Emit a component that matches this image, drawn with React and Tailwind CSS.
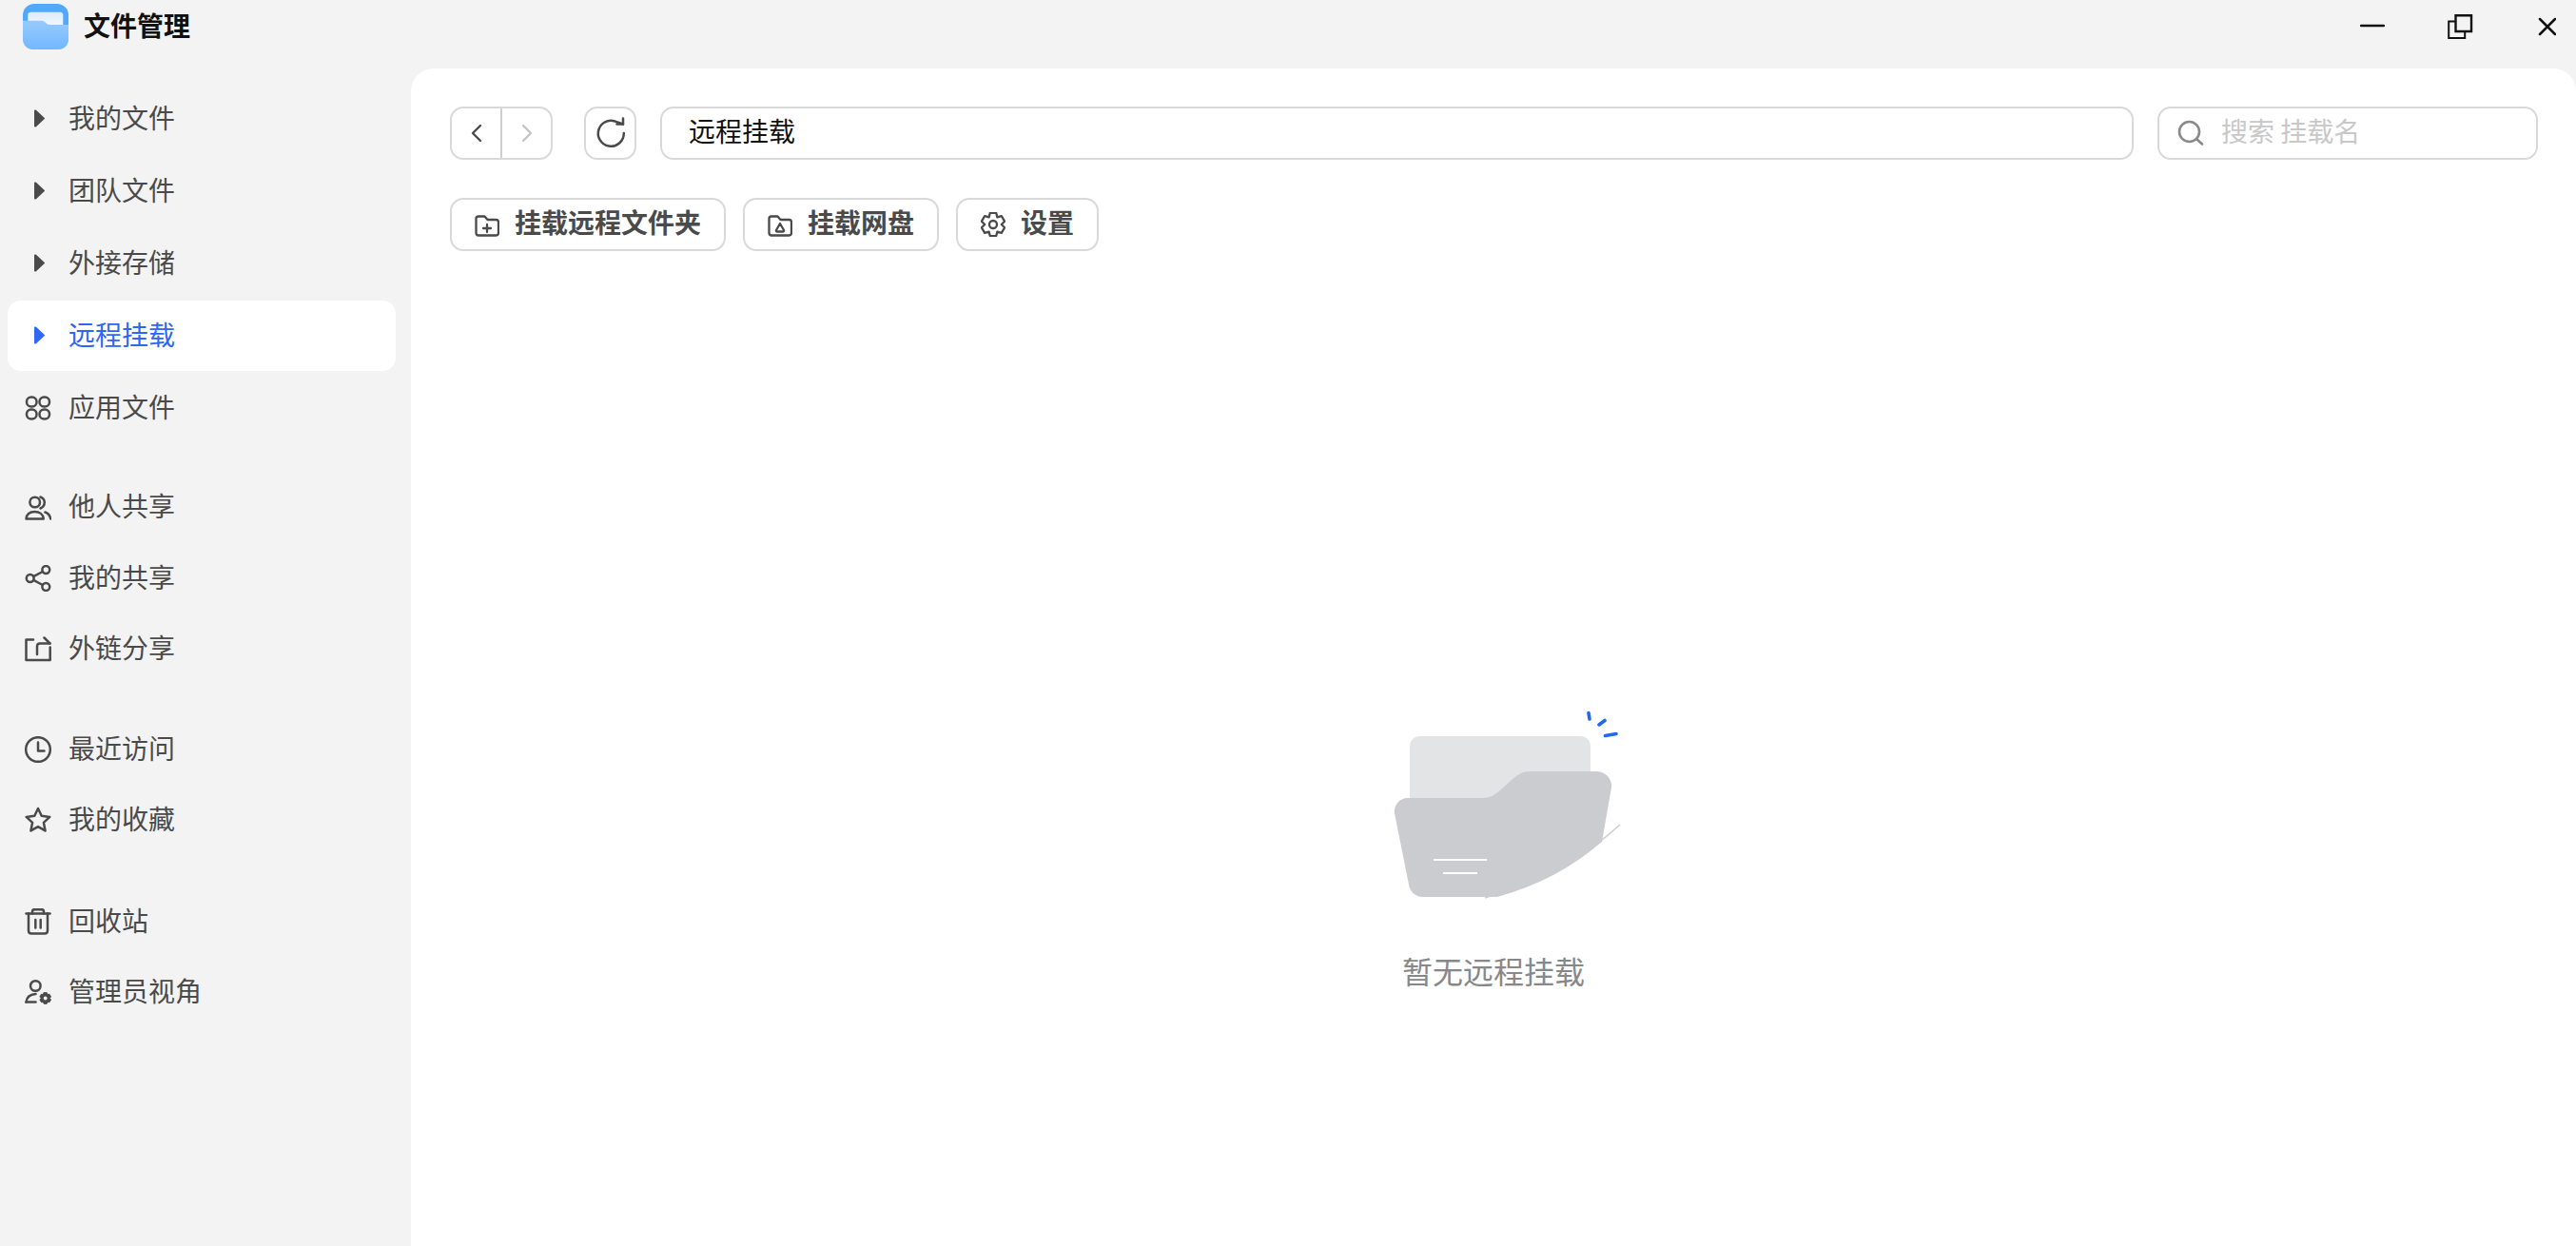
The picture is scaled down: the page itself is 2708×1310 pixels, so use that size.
const Caret = ({ className }) => (
  <svg viewBox="0 0 14 20" className={`w-3.5 h-5 ${className}`} fill="currentColor">
    <path d="M3 1.500C3 .5 4 0 5 .8l8.500 7.900q1 .8 0 1.600L5 18.200c-1 .8-2 .3-2-.7z" />
  </svg>
);

const Icon = ({ children }) => (
  <svg
    viewBox="0 0 28 28"
    className="w-7 h-7"
    fill="none"
    stroke="#4a4a4a"
    strokeWidth="2.500"
    strokeLinecap="round"
    strokeLinejoin="round"
  >
    {children}
  </svg>
);

const AppsIcon = () => (
  <Icon>
    <rect x="2" y="2.500" width="10.500" height="10" rx="4.800" />
    <rect x="15.500" y="2.500" width="10.500" height="10" rx="4.800" />
    <rect x="2" y="15.500" width="10.500" height="10" rx="4.800" />
    <rect x="15.500" y="15.500" width="10.500" height="10" rx="4.800" />
  </Icon>
);

const UsersIcon = () => (
  <Icon>
    <circle cx="10.700" cy="9" r="5.300" />
    <path d="M1.500 26.500c.5-4.700 4-7.500 9-7.500s8.800 2.800 9.300 7.500z" />
    <path d="M16.500 3.500c2.600 1 4.300 3.200 4.300 5.800s-1.700 5-4.300 6.200" />
    <path d="M21.500 19.500c3 1 5 3.500 5.800 7" />
  </Icon>
);

const ShareIcon = () => (
  <Icon>
    <circle cx="5.700" cy="14" r="3.900" />
    <circle cx="22.300" cy="5" r="3.900" />
    <circle cx="22.300" cy="23" r="3.900" />
    <path d="M9.200 12.200 18.800 7M9.200 15.800l9.600 5.200" />
  </Icon>
);

const LinkIcon = () => (
  <Icon>
    <path d="M9 4.500H1.500v21.500h25.200V12.500" />
    <path d="M13 20v-8.500c0-1.800 1.200-3 3-3h10.500" />
    <path d="m20.500 2.500 6 6" />
  </Icon>
);

const ClockIcon = () => (
  <Icon>
    <circle cx="14" cy="14" r="12.800" />
    <path d="M14 6.500v9h6.500" />
  </Icon>
);

const StarIcon = () => (
  <Icon>
    <path d="M14 2l3.700 7.800 8.600 1.100-6.400 5.900 1.700 8.600-7.600-4.200-7.600 4.200 1.700-8.600-6.400-5.900 8.600-1.100z" />
  </Icon>
);

const TrashIcon = () => (
  <Icon>
    <path d="M1.500 5.500h25" />
    <path d="M8 5.500V3.500C8 2 9 1.200 10.500 1.200h7C19 1.200 20 2 20 3.500v2" />
    <path d="M4 5.500v18c0 2 1 3 3 3h14c2 0 3-1 3-3v-18" />
    <path d="M11.300 12v8.500M16.700 12v8.500" />
  </Icon>
);

// little cog on the admin icon and on the settings button
const cogPath = (cx, cy, outer, inner) => {
  const pts = [];
  for (let i = 0; i < 6; i++) {
    const a = -90 + i * 60;
    [
      [a - 15, outer],
      [a + 15, outer],
      [a + 30, inner],
    ].forEach(([deg, r]) => {
      const t = (deg * Math.PI) / 180;
      pts.push(`${(cx + r * Math.cos(t)).toFixed(2)} ${(cy + r * Math.sin(t)).toFixed(2)}`);
    });
  }
  return `M${pts.join("L")}z`;
};

const AdminIcon = () => (
  <Icon>
    <circle cx="11.300" cy="7.500" r="5.300" />
    <path d="M1.500 24.500c.5-5 4-8 10-8.500" />
    <path d="M1.500 24.500h10" />
    <path d={cogPath(21.700, 20.500, 6, 4.500)} fill="#4a4a4a" strokeWidth="1" />
    <circle cx="21.700" cy="20.500" r="1.900" fill="#f3f3f3" stroke="none" />
  </Icon>
);

const SideRow = ({ icon, label, active }) => (
  <div
    className={`h-[74px] mx-2 w-[408px] rounded-[14px] flex items-center pl-[18px] gap-[18px] text-[28px] ${
      active ? "bg-white text-[#2f66f6]" : "text-[#4a4a4a]"
    }`}
  >
    <span className="w-7 h-7 flex items-center justify-center shrink-0">{icon}</span>
    <span className="pb-1">{label}</span>
  </div>
);

const OutlineBtn = ({ icon, label }) => (
  <button className="h-[56px] px-6 rounded-[14px] border-2 border-[#d9d9d9] flex items-center gap-4 text-[28px] font-bold text-[#4a4a4a]">
    <span className="w-[26px] h-[26px] shrink-0">{icon}</span>
    <span className="pb-[6px]">{label}</span>
  </button>
);

const BtnIcon = ({ children }) => (
  <svg
    viewBox="0 0 26 26"
    className="w-[26px] h-[26px]"
    fill="none"
    stroke="#4a4a4a"
    strokeWidth="2.300"
    strokeLinecap="round"
    strokeLinejoin="round"
  >
    {children}
  </svg>
);

const FOLDER = "M1.500 7c0-1.500 1-2.500 2.500-2.500h6.500l3 3.500h9c1.500 0 2.500 1 2.500 2.500v11.500c0 1.500-1 2.500-2.500 2.500H4c-1.500 0-2.500-1-2.500-2.500z";

export default function App() {
  return (
    <div
      className="w-[2708px] h-[1310px] bg-[#f3f3f3] flex flex-col overflow-hidden"
      style={{ fontFamily: '"Noto Sans CJK SC", "Noto Sans", sans-serif' }}
    >
      {/* title bar */}
      <div className="h-[72px] shrink-0 flex justify-between pl-6 pr-[21px]">
        <div className="flex items-start gap-4 pt-1">
          <svg viewBox="0 0 48 48" className="w-12 h-12">
            <defs>
              <linearGradient id="logoBody" x1="0" y1="0" x2="0" y2="1">
                <stop offset="0" stopColor="#97cbff" />
                <stop offset="1" stopColor="#72b7ff" />
              </linearGradient>
              <linearGradient id="logoPaper" x1="0" y1="0" x2="0" y2="1">
                <stop offset="0" stopColor="#dcebfc" />
                <stop offset="1" stopColor="#ffffff" />
              </linearGradient>
            </defs>
            <rect width="48" height="48" rx="12" fill="#52a8fb" />
            <path d="M5.300 12c0-2.200 1.200-3.300 3.300-3.300h30.400c2.200 0 3.300 1.100 3.300 3.300v18H5.300z" fill="url(#logoPaper)" />
            <path d="M0 17.700h20c3.500 0 4.500 4.300 9 4.300h19v14c0 8-4 12-12 12H12C4 48 0 44 0 36z" fill="url(#logoBody)" />
          </svg>
          <span className="text-[28px] leading-[44px] font-bold text-[#111]">文件管理</span>
        </div>
        <div className="flex items-start gap-[66px] pt-[14px]">
          <svg viewBox="0 0 26 28" className="w-[26px] h-7" fill="none" stroke="#111" strokeWidth="2.500" strokeLinecap="round">
            <path d="M1 13h24" />
          </svg>
          <svg viewBox="0 0 28 28" className="w-7 h-7" fill="none" stroke="#111" strokeWidth="2.400">
            <path d="M8.500 2.200H25v16.800H8.500z" />
            <path d="M8.500 8.500H1.200V26h17v-7" strokeWidth="2" />
          </svg>
          <svg viewBox="0 0 20 28" className="w-5 h-7" fill="none" stroke="#111" strokeWidth="2.500" strokeLinecap="round">
            <path d="M3 6l16 16M19 6 3 22" />
          </svg>
        </div>
      </div>

      <div className="flex-1 flex min-h-0">
        {/* sidebar */}
        <aside className="w-[432px] shrink-0 pt-4">
          <div className="flex flex-col gap-[2px]">
            <SideRow icon={<Caret className="text-[#4a4a4a]" />} label="我的文件" />
            <SideRow icon={<Caret className="text-[#4a4a4a]" />} label="团队文件" />
            <SideRow icon={<Caret className="text-[#4a4a4a]" />} label="外接存储" />
            <SideRow icon={<Caret className="text-[#2f66f6]" />} label="远程挂载" active />
            <SideRow icon={<AppsIcon />} label="应用文件" />
          </div>
          <div className="flex flex-col gap-[0.5px] mt-[30px]">
            <SideRow icon={<UsersIcon />} label="他人共享" />
            <SideRow icon={<ShareIcon />} label="我的共享" />
            <SideRow icon={<LinkIcon />} label="外链分享" />
          </div>
          <div className="flex flex-col mt-8">
            <SideRow icon={<ClockIcon />} label="最近访问" />
            <SideRow icon={<StarIcon />} label="我的收藏" />
          </div>
          <div className="flex flex-col mt-[33px]">
            <SideRow icon={<TrashIcon />} label="回收站" />
            <SideRow icon={<AdminIcon />} label="管理员视角" />
          </div>
        </aside>

        {/* main panel */}
        <main className="flex-1 bg-white rounded-t-[24px] pt-10 pl-[41px] pr-10 flex flex-col">
          <div className="flex items-stretch h-[56px]">
            <div className="w-[108px] rounded-[14px] border-2 border-[#d9d9d9] flex">
              <div className="flex-1 flex items-center justify-center border-r-2 border-[#cfcfcf]">
                <svg viewBox="0 0 14 20" className="w-3.5 h-5" fill="none" stroke="#4a4a4a" strokeWidth="2.400" strokeLinecap="round" strokeLinejoin="round">
                  <path d="M11 2 3 10l8 8" />
                </svg>
              </div>
              <div className="flex-1 flex items-center justify-center">
                <svg viewBox="0 0 14 20" className="w-3.5 h-5" fill="none" stroke="#c4c4c4" strokeWidth="2.400" strokeLinecap="round" strokeLinejoin="round">
                  <path d="m3 2 8 8-8 8" />
                </svg>
              </div>
            </div>
            <div className="w-[55px] ml-[33px] rounded-[14px] border-2 border-[#d9d9d9] flex items-center justify-center">
              <svg viewBox="0 0 32 32" className="w-8 h-8 overflow-visible" fill="none" stroke="#4a4a4a" strokeWidth="2.500" strokeLinecap="round" strokeLinejoin="round">
                <path d="M29.800 16A13.500 13.500 0 1 1 23 4.500l6 2" />
                <path d="M29 .5v6h-6.500" />
              </svg>
            </div>
            <div className="flex-1 ml-[25px] rounded-[14px] border-2 border-[#d9d9d9] flex items-center pl-[28px] text-[28px] text-[#111]">
              <span className="pb-[6px]">远程挂载</span>
            </div>
            <div className="w-[400px] ml-[25px] rounded-[14px] border-2 border-[#d9d9d9] flex items-center pl-[19px] gap-[18px] text-[28px] text-[#c8c8c8]">
              <svg viewBox="0 0 28 28" className="w-7 h-7 shrink-0" fill="none" stroke="#8a8a8a" strokeWidth="2.600" strokeLinecap="round">
                <circle cx="12.500" cy="12.500" r="10.500" />
                <path d="m20.500 20.500 5.500 5" />
              </svg>
              <span className="pb-[6px]">搜索 挂载名</span>
            </div>
          </div>

          <div className="flex gap-[18px] mt-10">
            <OutlineBtn
              label="挂载远程文件夹"
              icon={
                <BtnIcon>
                  <path d={FOLDER} />
                  <path d="M13 13v8M9 17h8" />
                </BtnIcon>
              }
            />
            <OutlineBtn
              label="挂载网盘"
              icon={
                <BtnIcon>
                  <path d={FOLDER} />
                  <path d="M13 12 9 19c-.4.8 0 1.500.8 1.500h6.400c.8 0 1.200-.7.8-1.500z" />
                </BtnIcon>
              }
            />
            <OutlineBtn
              label="设置"
              icon={
                <BtnIcon>
                  <path d={cogPath(13, 13, 12.500, 8.800)} />
                  <circle cx="13" cy="13" r="4" />
                </BtnIcon>
              }
            />
          </div>

          {/* empty state */}
          <div className="flex flex-col items-center mt-[466px] -ml-px">
            <svg viewBox="0 0 300 220" className="w-[300px] h-[220px]" fill="none">
              <rect x="62" y="44" width="190" height="90" rx="10" fill="#e3e4e6" />
              <path d="M283 137C245 172 195 198 141 214" stroke="#cbccd0" strokeWidth="1.500" />
              <path
                d="M60 109h78c8 0 13-3 19-8l12-11c7-6 12-9 20-9h69c10 0 17 8 16 17l-10 57c-32 28-70 47-110 58H76c-8 0-14-6-15-13L46 125c-1-8 5-16 14-16z"
                fill="#cbccd0"
              />
              <path d="M87 174h56M97 188h36" stroke="#fff" strokeWidth="2" />
              <path d="M250 19.500l1 6.500M261 32l6-4.500M267.500 43.500l11.500-2" stroke="#2468f2" strokeWidth="3.600" strokeLinecap="round" />
            </svg>
            <div className="mt-[46px] text-[32px] leading-[48px] text-[#888]">暂无远程挂载</div>
          </div>
        </main>
      </div>
    </div>
  );
}
